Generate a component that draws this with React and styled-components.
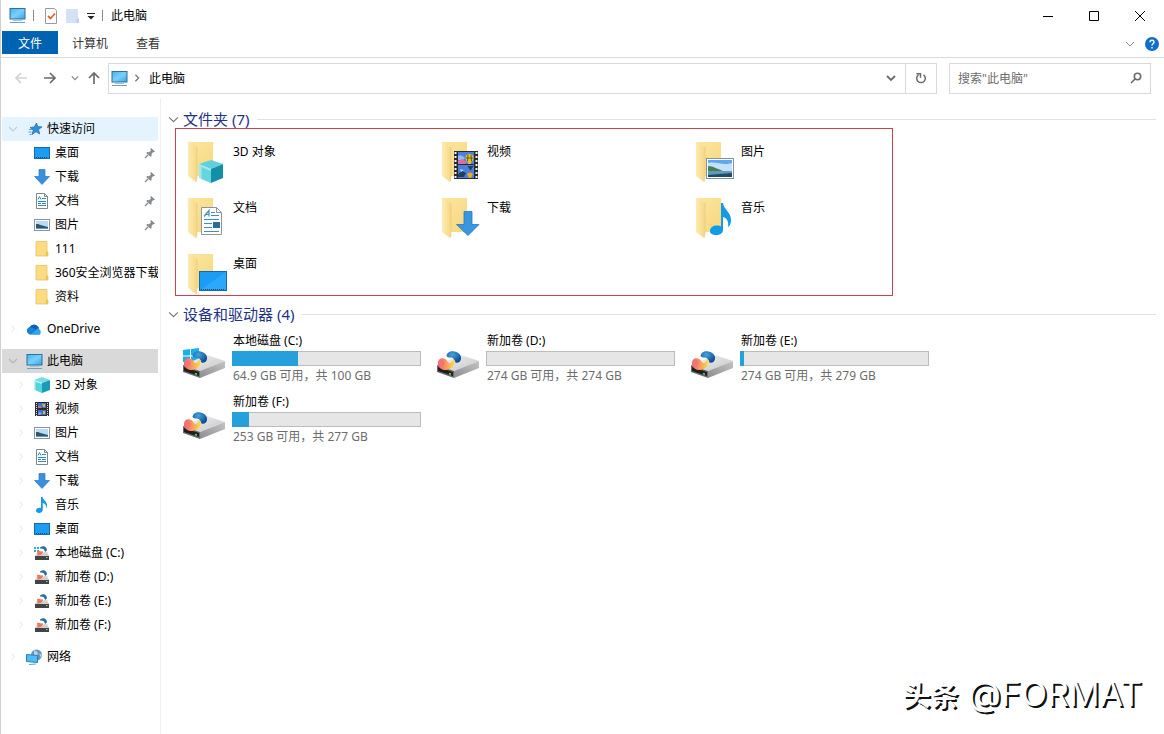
import React, { useState } from "react";
import styled, { createGlobalStyle } from "styled-components";

const GlobalStyle = createGlobalStyle`
* {
  box-sizing: border-box;
}
body {
  margin: 0;
  background: #fff;
}
body, button, input {
  font-family: "Noto Sans", "Noto Sans CJK SC", sans-serif;
  font-size: 12px;
  color: #000;
}
button {
  border: 0;
  padding: 0;
  background: none;
}
svg {
  display: block;
  flex-shrink: 0;
}
`;

const Window = styled.div`
  position: relative;
  display: flex;
  flex-direction: column;
  min-height: 100vh;
  border-left: 1px solid #d0d0d0;
  background: #fff;
`;

const TitleBar = styled.header`
  display: flex;
  align-items: center;
  height: 31px;
  padding: 0 1px 0 8px;
`;

const QuickTools = styled.div`
  display: flex;
  align-items: center;
  gap: 7px;
`;

const Separator = styled.span`
  width: 1px;
  height: 11px;
  margin-right: 2px;
  background: #8a8a8a;
`;

const Title = styled.h1`
  flex: 1;
  margin: 0 0 0 6px;
  padding-bottom: 1px;
  font-size: 12px;
  font-weight: 400;
`;

const IconButton = styled.button`
  display: flex;
  align-items: center;
  justify-content: center;
  width: ${(props) => props.$width || 16}px;
  height: ${(props) => props.$height || 30}px;
`;

const Tabs = styled.nav`
  display: flex;
  align-items: flex-start;
  height: 27px;
  padding: 0 4px 0 1px;
  border-bottom: 1px solid #dadbdc;
`;

const Tab = styled.button`
  height: 23px;
  padding: 0 ${(props) => (props.$active ? 16 : 14)}px;
  color: ${(props) => (props.$active ? "#fff" : "#333")};
  background: ${(props) => (props.$active ? "#0063b1" : "transparent")};
`;

const TabTools = styled.div`
  display: flex;
  gap: 6px;
  margin-left: auto;
`;

const NavBar = styled.div`
  display: flex;
  align-items: center;
  height: 40px;
  padding: 0 13px 0 12px;
`;

const NavButtons = styled.div`
  display: flex;
  align-items: center;
`;

const Address = styled.div`
  display: flex;
  align-items: center;
  flex: 1;
  height: 31px;
  padding-left: 2px;
  border: 1px solid #d9d9d9;
`;

const Crumb = styled.button`
  margin-left: 3px;
`;

const AddressEnd = styled.div`
  display: flex;
  margin-left: auto;
`;

const Refresh = styled(IconButton)`
  border-left: 1px solid #d9d9d9;
`;

const Search = styled.label`
  display: flex;
  align-items: center;
  width: 202px;
  height: 31px;
  margin-left: 12px;
  padding: 0 7px 0 8px;
  border: 1px solid #d9d9d9;
`;

const SearchInput = styled.input`
  flex: 1;
  min-width: 0;
  padding: 0;
  border: 0;
  outline: 0;
  &::placeholder {
    color: #6d6d6d;
  }
`;

const Body = styled.div`
  display: flex;
  flex: 1;
`;

const Sidebar = styled.aside`
  width: 160px;
  flex-shrink: 0;
  padding: 19px 2px 0 1px;
  border-right: 1px solid #f0f0f0;
`;

const TreeGroup = styled.ul`
  margin: 0 0 8px;
  padding: 0;
  list-style: none;
`;

const TreeRow = styled.li`
  display: flex;
  align-items: center;
  height: 24px;
  padding-left: ${(props) => (props.$root ? 5 : 13)}px;
  padding-right: ${(props) => (props.$pinned ? 2 : 0)}px;
  background: ${(props) => props.$tone || "transparent"};
`;

const TreeArrow = styled.span`
  display: flex;
  justify-content: center;
  flex-shrink: 0;
  width: 12px;
  margin-right: 7px;
`;

const TreeLabel = styled.span`
  flex: 1;
  margin-left: ${(props) => (props.$root ? 4 : 5)}px;
  padding-bottom: 2px;
  overflow: hidden;
  white-space: nowrap;
`;

const Content = styled.main`
  flex: 1;
  min-width: 0;
  padding: 12px 8px 0 7px;
`;

const SectionTitle = styled.h2`
  display: flex;
  align-items: center;
  gap: 4px;
  height: 18px;
  margin: 0;
  font-size: 15px;
  font-weight: 400;
  line-height: 18px;
  color: #1e3287;
  &::after {
    content: "";
    flex: 1;
    height: 1px;
    margin-left: 4px;
    background: #e2e2e2;
  }
`;

const Folders = styled.div`
  display: grid;
  grid-template-columns: 254px 254px 1fr;
  grid-auto-rows: 46px;
  row-gap: 10px;
  max-width: 718px;
  margin: 0 0 9px 7px;
  padding: 8px 0 0 4px;
  border: 1px solid #c9444a;
`;

const Folder = styled.div`
  display: flex;
  gap: 4px;
`;

const FolderName = styled.span`
  padding: 6px 0 0 1px;
  line-height: 18px;
`;

const Drives = styled.div`
  display: grid;
  grid-template-columns: repeat(auto-fill, 241px);
  gap: 8px 13px;
  padding: 9px 0 0 12px;
`;

const Drive = styled.div`
  display: flex;
  gap: 4px;
`;

const DriveInfo = styled.div`
  flex: 1;
  line-height: 18px;
`;

const DriveText = styled.div`
  height: 18px;
  padding-left: 1px;
  white-space: nowrap;
  color: ${(props) => (props.$muted ? "#6d6d6d" : "#000")};
`;

const Meter = styled.div`
  height: 15px;
  margin: 1px 0;
  background: #e6e6e6;
  box-shadow: inset 0 0 0 1px #bcbcbc;
`;

const MeterFill = styled.div`
  height: 100%;
  background: #26a0da;
`;

const Watermark = styled.div`
  position: absolute;
  right: 22px;
  bottom: 16px;
  font-family: Inter, "Noto Sans CJK SC", sans-serif;
  font-size: 34px;
  line-height: 44px;
  color: #fff;
  text-shadow: 2px 2px 0 #111;
  b {
    font-size: 28px;
  }
`;

function Chevron({ dir = "down", size = 10, color = "#777", width = 1 }) {
  const paths = {
    down: "M1 3l4 4 4-4",
    right: "M3 1l4 4-4 4",
  };
  return (
    <svg width={size} height={size} viewBox="0 0 10 10" fill="none" stroke={color} strokeWidth={width}>
      <path d={paths[dir]} />
    </svg>
  );
}

function Arrow({ dir, color }) {
  const turn = { left: 0, up: 90, right: 180 }[dir];
  return (
    <svg width="14" height="14" viewBox="0 0 14 14" fill="none" stroke={color} strokeWidth="1.7">
      <path d="M13 7H2M7 2L2 7l5 5" transform={`rotate(${turn} 7 7)`} />
    </svg>
  );
}

function PcIcon({ size = 17 }) {
  return (
    <svg width={size} height={size} viewBox="0 0 17 17">
      <defs>
        <linearGradient id="pc" x1="0" y1="0" x2="1" y2="1">
          <stop offset="0" stopColor="#39b4f4" />
          <stop offset=".5" stopColor="#7bd0fb" />
          <stop offset="1" stopColor="#2fa4ec" />
        </linearGradient>
      </defs>
      <rect x="1" y="1.5" width="15" height="10.5" fill="url(#pc)" stroke="#356f92" />
      <path d="M4 13.5h9" stroke="#9dc6de" />
      <path d="M1 15.5h15" stroke="#6f9fbd" />
    </svg>
  );
}

function StarIcon() {
  return (
    <svg width="17" height="16" viewBox="-1 0 17 16">
      <path d="M9.500 2l1.200 3.600 4.300.3-3.500 2.700 1.200 4.400-3.700-2.300-4 2.800 1.300-4.400L3 6.500l4.300-.6z" fill="#2f8fd8" stroke="#2474b8" strokeWidth=".8" />
      <path d="M2 8.500h3M1.500 11h3M2.500 13.500h2" stroke="#4aa3e4" />
    </svg>
  );
}

function DesktopIcon() {
  return (
    <svg width="16" height="16" viewBox="0 0 16 16">
      <rect x=".5" y="2.500" width="15" height="11" fill="#1b9cf5" stroke="#1668a8" />
      <path d="M2 12.500h12" stroke="#0c4f8a" strokeDasharray="1 1" />
    </svg>
  );
}

function DownloadIcon() {
  return (
    <svg width="16" height="16" viewBox="0 0 16 16">
      <path d="M5 .5h6v7h4.500L8 15.500.5 7.500H5z" fill="#3a90dc" stroke="#2f78b8" strokeWidth=".7" />
    </svg>
  );
}

function DocIcon() {
  return (
    <svg width="16" height="16" viewBox="0 0 16 16" fill="none">
      <path d="M2.500.5h8l3 3v12h-11z" fill="#fff" stroke="#7b8790" />
      <path d="M10.500.5v3h3" stroke="#7b8790" />
      <path d="M4 6.500l1.500-3 1.500 3M8 5.500h4M4 8.500h8M4 10.500h3M4 12.500h8M8 10.500h4" stroke="#2f88c5" />
    </svg>
  );
}

function PictureIcon() {
  return (
    <svg width="16" height="16" viewBox="0 0 16 16">
      <rect x=".5" y="2.500" width="15" height="11" fill="#fff" stroke="#8795a3" />
      <rect x="2" y="4" width="12" height="8" fill="#b9dcf5" />
      <path d="M2 7c4 0 6 2 12 3v2H2z" fill="#2e566b" />
      <path d="M2 11h12v1H2z" fill="#5a9cc0" />
    </svg>
  );
}

function FolderIcon() {
  return (
    <svg width="16" height="16" viewBox="0 0 16 16">
      <path d="M2 .5h11V10l1 1v4H2z" fill="#fbdc80" stroke="#e3bb5b" strokeWidth=".7" />
      <path d="M11.500 15v-3l1.500-2 1 1v4z" fill="#f1c453" />
    </svg>
  );
}

function CloudIcon() {
  return (
    <svg width="17" height="16" viewBox="0 0 17 16">
      <path d="M4 13.500a4 4 0 0 1-.4-7.500A5 5 0 0 1 12 5.500l1.300 1.800z" fill="#0f5fb8" />
      <path d="M4 13.500a3.700 3.700 0 0 1-1-7 4 4 0 0 1 4 .6l7.600 4.900-.8 1.500z" fill="#1683d9" />
      <path d="M5 13.500l6.500-6a3.400 3.400 0 0 1 2 6z" fill="#2ea3ee" />
    </svg>
  );
}

function CubeIcon() {
  return (
    <svg width="16" height="16" viewBox="0 0 16 16">
      <path d="M8 0l8 3-8 3-8-3z" fill="#7adbe8" />
      <path d="M0 3l8 3v10l-8-3z" fill="#b5f0f5" />
      <path d="M1.500 5L8 7v9l-6.500-3z" fill="#55d2e0" />
      <path d="M16 3L8 6v10l8-3z" fill="#169db5" />
    </svg>
  );
}

function FilmArt() {
  return (
    <g>
      <path d="M0 0h24v28H0z" fill="#2a2a2e" />
      <path d="M4 1h16v12H4zM4 14h16v13H4z" fill="#4a80dc" />
      <path d="M1.500 1v27M22.500 1v27" stroke="#f2f2f2" strokeWidth="2" strokeDasharray="2 2" />
      <path d="M4 5c3-2 5 0 7 2l-2 2H4z" fill="#8cbcf2" />
      <path d="M4 10l4-2 5 3-2 2H4z" fill="#e36ba0" />
      <path d="M11.500 7a4 4 0 0 1 8 0c0 2.500-2 4-3 6h-2c-1-2-3-3.500-3-6z" fill="#e8c02c" />
      <path d="M14 3.500l-.5 7M17 3.500l.5 7M12 7h7" stroke="#4a4620" strokeWidth=".8" />
      <path d="M13.500 15h6l-3 4.500zM4 23l4-3 4 2-2 4H4z" fill="#213f5e" />
      <path d="M13 23c2-2 5-1 6 0l-2 4h-2z" fill="#f0aa20" />
      <path d="M6 18l4 1-3 2z" fill="#9cd6ff" />
    </g>
  );
}

function VideoIcon() {
  return (
    <svg width="16" height="16" viewBox="0 0 16 16">
      <path d="M1 1h14v14H1z" fill="#2d2d31" />
      <path d="M4 2h8v5H4zM4 9h8v5H4z" fill="#416fca" />
      <path d="M2.500 2v13M13.500 2v13" stroke="#e8e8e8" strokeDasharray="1 1" />
      <path d="M8 3h3v3H9zM9 10h2v3H9z" fill="#d6b23a" />
      <path d="M4 5h3v2H4z" fill="#c27390" />
      <path d="M5 11l3 1-2 2H4z" fill="#7fa9e8" />
    </svg>
  );
}

function MusicIcon() {
  return (
    <svg width="16" height="16" viewBox="0 0 16 16">
      <path d="M7 0h1.500c.5 3 4.500 4 4.500 8 0 1.500-.5 2.500-1 3 .3-3-1-4.500-3.200-5v6.500C8.800 14.500 7 16 5 16s-3-1-3-2.400C2 12 3.700 10.800 5.500 10.800c.6 0 1.100.1 1.500.3z" fill="#149ae8" />
    </svg>
  );
}

function DriveArt() {
  return (
    <g>
      <defs>
        <linearGradient id="drvTop" x1="0" y1="0" x2="1" y2="1">
          <stop offset="0" stopColor="#f3f3f3" />
          <stop offset="1" stopColor="#c6c6c8" />
        </linearGradient>
        <linearGradient id="drvSide" x1="0" y1="1" x2="1" y2="0">
          <stop offset="0" stopColor="#8d8d90" />
          <stop offset="1" stopColor="#c4c4c7" />
        </linearGradient>
        <linearGradient id="swirl" x1="0" y1="0" x2="1" y2="0">
          <stop offset="0" stopColor="#f0606c" />
          <stop offset=".5" stopColor="#fb9b5c" />
          <stop offset="1" stopColor="#ffdf3e" />
        </linearGradient>
        <radialGradient id="swirlBlue" cx=".4" cy=".3" r=".7">
          <stop offset="0" stopColor="#45a4e0" />
          <stop offset="1" stopColor="#0d4a94" />
        </radialGradient>
      </defs>
      <path d="M2 33l24-10 18 6-25 10z" fill="url(#drvTop)" />
      <path d="M19 39l25-10v7L19 46z" fill="url(#drvSide)" />
      <path d="M2 33l17 6v7L2 40z" fill="#6a6b6d" />
      <path d="M3 35l15 5v4L3 39z" fill="#1d1f20" />
      <path d="M14 41.500l2 .7" stroke="#6dd35b" strokeWidth="1.500" />
      <path d="M11.500 24c.5-4 4.500-5.500 8-4.500 5 1 8 5 6 9-1 2-3 2.500-5 2-1-3-2-5-5-5-2 0-3-.5-4-1.500z" fill="url(#swirlBlue)" />
      <path d="M3 31c0-4 3-5.500 6-4.500 4 1 3 4.500 5.500 4.500 2 0 3-2 4-4 3 3 0 10-7 11-5 .5-9-3-8.500-7z" fill="url(#swirl)" />
      <circle cx="6.500" cy="31" r="3" fill="#f4727a" />
    </g>
  );
}

function WinLogo() {
  return <path d="M2 18l7-1v6.500H2zM10 17l8-1v7.500h-8zM2 24.500h7V31l-7-1zM10 24.500h8V32l-8-1z" fill="#19b1ea" />;
}

function DriveIcon({ system }) {
  return (
    <svg width="48" height="53" viewBox="-1 0 48 53">
      {system && <WinLogo />}
      <DriveArt />
    </svg>
  );
}

function SmallDriveIcon({ system }) {
  return (
    <svg width="16" height="16" viewBox="0 0 16 16">
      {system && <path d="M0 2h2v2H0zM3 2h2v2H3zM0 5h2v2H0zM3 5h2v2H3z" fill="#1fb0e8" />}
      <path d="M3 8l10-1 2 4H1z" fill="#d9cfc9" />
      <path d="M1 11h14v4H1z" fill="#3f4448" />
      <path d="M12 12.500h1.500" stroke="#7ee07a" />
      <path d="M6 2.500c3-2.500 7-1 7 3l-2 1.500C10.500 4 9 3.200 6 3.500z" fill="#276fa8" />
      <path d="M3 6c3-1 3 1.500 6 0 0 3-2 5-5.500 4.500z" fill="#ea7b62" />
    </svg>
  );
}

function NetworkIcon() {
  return (
    <svg width="17" height="16" viewBox="0 0 17 16">
      <circle cx="10.500" cy="6" r="5.500" fill="#6796b5" />
      <path d="M8 1.500c3 0 5 3 3 5-2 1-1 3-3 3zM13 4l3 2-1 3z" fill="#b6d3e2" />
      <path d="M.5 5.500l11 1v7l-11-1z" fill="#4fbcf5" stroke="#2b7fb5" />
      <path d="M3 15.500l7-.5" stroke="#5fa3c7" />
    </svg>
  );
}

function PinIcon() {
  return (
    <svg width="12" height="12" viewBox="0 0 12 12">
      <path d="M7 1l4 3.500-1 .7-.7-.1L7.500 7l.2 2-1 .8L2.300 6l.9-.9 2 .1L7 3.200l-.7-1z" fill="#858c91" />
      <path d="M4.500 7.500L1 11" stroke="#858c91" strokeWidth="1.200" />
    </svg>
  );
}

const overlays = {
  cube: (
    <g>
      <path d="M19 27l12-4 12 4-12 5z" fill="#5fd0de" />
      <path d="M19 27l12 5v14l-12-5z" fill="#9eeaf0" />
      <path d="M21.500 30l9.500 4v12l-9.500-4z" fill="#42c6d6" opacity=".6" />
      <path d="M43 27l-12 5v14l12-5z" fill="#138fa8" />
    </g>
  ),
  film: (
    <g transform="translate(20 14)">
      <FilmArt />
    </g>
  ),
  picture: (
    <g>
      <rect x="18.500" y="21.500" width="27" height="20" fill="#fff" stroke="#7c93b0" />
      <path d="M20 23h24v17H20z" fill="#5fa6ec" />
      <path d="M20 26c8-2 14 3 24 0v8H20z" fill="#c3e2fa" />
      <path d="M20 29c5 0 9 3 18 6H20z" fill="#4a7d4f" />
      <path d="M20 34h24v6H20z" fill="#5b9cba" />
      <path d="M20 38l24-2v4H20z" fill="#244a61" />
    </g>
  ),
  doc: (
    <g fill="none">
      <path d="M21.500 14.500h15l5 5v22h-20z" fill="#fff" stroke="#8e969c" />
      <path d="M36.500 14.500v5h5" stroke="#8e969c" />
      <path d="M24 23.500l5-6v6M25.500 21.500h3M31 19.500h4M31 22.500h8M24 26.500h15M24 30.500h8M24 34.500h8M24 38.500h15" stroke="#3a8fc6" strokeWidth="1.200" />
      <path d="M33 29h7v6h-7z" fill="#2c6d96" />
    </g>
  ),
  download: (
    <path d="M30 18.500h8v13h7L34 42.500 22.500 31.500H30z" fill="#3996e0" stroke="#2878b8" strokeWidth=".8" />
  ),
  music: (
    <path d="M33 10h2c1 7 8 9 8 17 0 3-1 6-3 7 1-5-1-9-5-10v13c0 3-3 5-6.500 5S22 41 22 38c0-3.500 3-5.500 7-5.500 1.500 0 3 .3 4 .8z" fill="#119be9" />
  ),
  desktop: (
    <g>
      <rect x="19.500" y="22.500" width="27" height="19" fill="#1b9cf5" stroke="#1668a8" />
      <path d="M20 41L46 23v18z" fill="#3fb2ff" opacity=".5" />
      <path d="M21 40.500h24" stroke="#0c4f8a" strokeDasharray="1 1" />
    </g>
  ),
};

function BigFolder({ overlay }) {
  return (
    <svg width="48" height="46" viewBox="0 0 48 46">
      <defs>
        <linearGradient id="fBack" x1="0" y1="0" x2="1" y2="1">
          <stop offset="0" stopColor="#fbe6a3" />
          <stop offset="1" stopColor="#f7d77c" />
        </linearGradient>
        <linearGradient id="fFront" x1="0" y1="0" x2="1" y2="0">
          <stop offset="0" stopColor="#fdebb0" />
          <stop offset="1" stopColor="#f6d886" />
        </linearGradient>
      </defs>
      <path d="M8 5h25v34H16z" fill="url(#fBack)" />
      <path d="M8 5l9 5v31l-1 4-8-6z" fill="url(#fFront)" />
      <path d="M17 10v31l-1 4" stroke="#e8c673" strokeWidth=".6" fill="none" />
      {overlays[overlay]}
    </svg>
  );
}

const quickAccess = [
  { name: "桌面", icon: <DesktopIcon />, pinned: true },
  { name: "下载", icon: <DownloadIcon />, pinned: true },
  { name: "文档", icon: <DocIcon />, pinned: true },
  { name: "图片", icon: <PictureIcon />, pinned: true },
  { name: "111", icon: <FolderIcon /> },
  { name: "360安全浏览器下载", icon: <FolderIcon /> },
  { name: "资料", icon: <FolderIcon /> },
];

const thisPc = [
  { name: "3D 对象", icon: <CubeIcon /> },
  { name: "视频", icon: <VideoIcon /> },
  { name: "图片", icon: <PictureIcon /> },
  { name: "文档", icon: <DocIcon /> },
  { name: "下载", icon: <DownloadIcon /> },
  { name: "音乐", icon: <MusicIcon /> },
  { name: "桌面", icon: <DesktopIcon /> },
  { name: "本地磁盘 (C:)", icon: <SmallDriveIcon system /> },
  { name: "新加卷 (D:)", icon: <SmallDriveIcon /> },
  { name: "新加卷 (E:)", icon: <SmallDriveIcon /> },
  { name: "新加卷 (F:)", icon: <SmallDriveIcon /> },
];

const folders = [
  { name: "3D 对象", overlay: "cube" },
  { name: "视频", overlay: "film" },
  { name: "图片", overlay: "picture" },
  { name: "文档", overlay: "doc" },
  { name: "下载", overlay: "download" },
  { name: "音乐", overlay: "music" },
  { name: "桌面", overlay: "desktop" },
];

const drives = [
  { name: "本地磁盘 (C:)", used: 35, text: "64.9 GB 可用，共 100 GB", system: true },
  { name: "新加卷 (D:)", used: 0, text: "274 GB 可用，共 274 GB" },
  { name: "新加卷 (E:)", used: 2, text: "274 GB 可用，共 279 GB" },
  { name: "新加卷 (F:)", used: 9, text: "253 GB 可用，共 277 GB" },
];

function TreeItem({ name, icon, root, arrow, arrowColor = "#e2e2e2", pinned, tone }) {
  return (
    <TreeRow $root={root} $pinned={pinned} $tone={tone}>
      <TreeArrow>
        {arrow && <Chevron dir={arrow} size={arrow === "right" ? 8 : 10} color={arrowColor} width={1.2} />}
      </TreeArrow>
      {icon}
      <TreeLabel $root={root}>{name}</TreeLabel>
      {pinned && <PinIcon />}
    </TreeRow>
  );
}

export default function App() {
  const [keyword, setKeyword] = useState("");
  return (
    <Window>
      <GlobalStyle />
      <TitleBar>
        <QuickTools>
          <PcIcon />
          <Separator />
          <IconButton aria-label="属性">
            <svg width="16" height="16" viewBox="0 0 16 16" fill="none">
              <path d="M2.500.5h9l2 2v13h-11z" fill="#fff" stroke="#9a9a9a" />
              <path d="M5 8l2.500 2.500L12 5.500" stroke="#e0632b" strokeWidth="1.800" />
            </svg>
          </IconButton>
          <IconButton $width={14} aria-label="新建文件夹">
            <svg width="14" height="16" viewBox="0 0 14 16">
              <path d="M0 1h12v9l1 1v4H0z" fill="#d3e2f5" />
              <path d="M10.500 15v-4l1.500-1 1 1v4z" fill="#bdd3ee" />
            </svg>
          </IconButton>
          <IconButton $width={8} aria-label="自定义快速访问工具栏">
            <svg width="8" height="8" viewBox="0 0 8 8">
              <path d="M0 1.500h8" stroke="#222" />
              <path d="M.5 4h7L4 7.500z" fill="#222" />
            </svg>
          </IconButton>
          <Separator />
        </QuickTools>
        <Title>此电脑</Title>
        <IconButton $width={46} aria-label="最小化">
          <svg width="10" height="10" viewBox="0 0 10 10">
            <path d="M0 5.500h10" stroke="#000" />
          </svg>
        </IconButton>
        <IconButton $width={46} aria-label="最大化">
          <svg width="10" height="10" viewBox="0 0 10 10">
            <path d="M.5.5h9v9h-9z" fill="none" stroke="#000" />
          </svg>
        </IconButton>
        <IconButton $width={46} aria-label="关闭">
          <svg width="10" height="10" viewBox="0 0 10 10">
            <path d="M0 0l10 10M10 0L0 10" stroke="#000" />
          </svg>
        </IconButton>
      </TitleBar>
      <Tabs>
        <Tab $active>文件</Tab>
        <Tab>计算机</Tab>
        <Tab>查看</Tab>
        <TabTools>
          <IconButton $height={26} aria-label="展开功能区">
            <Chevron color="#8f8f8f" />
          </IconButton>
          <IconButton $height={26} aria-label="帮助">
            <svg width="14" height="14" viewBox="0 0 14 14" fill="none">
              <circle cx="7" cy="7" r="7" fill="#0f6fc9" />
              <path d="M5 5.200c0-2.600 4-2.600 4 0C9 6.800 7 6.700 7 8.500M7 10v1.500" stroke="#fff" strokeWidth="1.400" />
            </svg>
          </IconButton>
        </TabTools>
      </Tabs>
      <NavBar>
        <NavButtons>
          <IconButton aria-label="后退"><Arrow dir="left" color="#d2d2d2" /></IconButton>
          <IconButton $width={42} aria-label="前进"><Arrow dir="right" color="#6b6b6b" /></IconButton>
          <IconButton $width={8} aria-label="最近浏览的位置">
            <Chevron size={8} width={1.6} color="#8a8a8a" />
          </IconButton>
          <IconButton $width={29} aria-label="上移"><Arrow dir="up" color="#6b6b6b" /></IconButton>
        </NavButtons>
        <Address>
          <PcIcon />
          <IconButton $width={18} aria-label="展开">
            <Chevron dir="right" size={8} width={1.6} />
          </IconButton>
          <Crumb>此电脑</Crumb>
          <AddressEnd>
            <IconButton $width={28} $height={29} aria-label="以前的位置">
              <Chevron width={1.8} color="#6b6b6b" />
            </IconButton>
            <Refresh $width={31} $height={29} aria-label="刷新">
              <svg width="12" height="12" viewBox="0 0 12 12" fill="none" stroke="#6b6b6b" strokeWidth="1.500">
                <path d="M8.500 2.800a4.300 4.300 0 1 1-5 0M1.500 1.800h4v4" />
              </svg>
            </Refresh>
          </AddressEnd>
        </Address>
        <Search>
          <SearchInput
            aria-label="搜索"
            placeholder={'搜索"此电脑"'}
            value={keyword}
            onChange={(e) => setKeyword(e.target.value)}
          />
          <svg width="14" height="14" viewBox="0 0 14 14" fill="none" stroke="#6b6b6b" strokeWidth="1.600">
            <circle cx="8.500" cy="5.500" r="3.200" />
            <path d="M6 8L2 12" />
          </svg>
        </Search>
      </NavBar>
      <Body>
        <Sidebar>
          <TreeGroup>
            <TreeItem root name="快速访问" icon={<StarIcon />} arrow="down" arrowColor="#c4ced6" tone="#e5f3ff" />
            {quickAccess.map((item) => <TreeItem key={item.name} {...item} />)}
          </TreeGroup>
          <TreeGroup>
            <TreeItem root name="OneDrive" icon={<CloudIcon />} arrow="right" />
          </TreeGroup>
          <TreeGroup>
            <TreeItem root name="此电脑" icon={<PcIcon />} arrow="down" arrowColor="#b4b4b4" tone="#d9d9d9" />
            {thisPc.map((item) => <TreeItem key={item.name} arrow="right" {...item} />)}
          </TreeGroup>
          <TreeGroup>
            <TreeItem root name="网络" icon={<NetworkIcon />} arrow="right" />
          </TreeGroup>
        </Sidebar>
        <Content>
          <SectionTitle><Chevron size={11} />文件夹 (7)</SectionTitle>
          <Folders>
            {folders.map((item) => (
              <Folder key={item.name}>
                <BigFolder overlay={item.overlay} />
                <FolderName>{item.name}</FolderName>
              </Folder>
            ))}
          </Folders>
          <SectionTitle><Chevron size={11} />设备和驱动器 (4)</SectionTitle>
          <Drives>
            {drives.map((item) => (
              <Drive key={item.name}>
                <DriveIcon system={item.system} />
                <DriveInfo>
                  <DriveText>{item.name}</DriveText>
                  <Meter role="progressbar" aria-label={item.name} aria-valuenow={item.used}>
                    <MeterFill style={{ width: `${item.used}%` }} />
                  </Meter>
                  <DriveText $muted>{item.text}</DriveText>
                </DriveInfo>
              </Drive>
            ))}
          </Drives>
        </Content>
      </Body>
      <Watermark><b>头条</b> @FORMAT</Watermark>
    </Window>
  );
}
